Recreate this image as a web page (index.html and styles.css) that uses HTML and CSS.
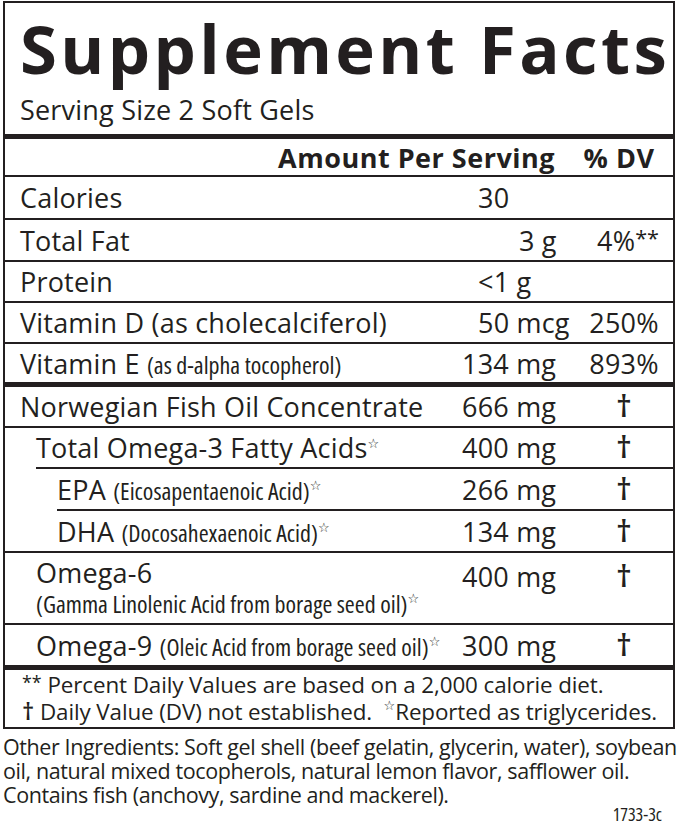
FILE: index.html
```html
<!DOCTYPE html>
<html lang="en">
<head>
<meta charset="utf-8">
<title>Supplement Facts</title>
<link rel="stylesheet" href="styles.css">
</head>
<body>
<div class="label">
  <div class="head">
    <h1 class="title">Supplement Facts</h1>
    <div class="serving">Serving Size 2 Soft Gels</div>
  </div>
  <div class="row colhead">
    <div class="hname">Amount Per Serving</div>
    <div class="dv">% DV</div>
  </div>
  <div class="row h43">
    <div class="name">Calories</div>
    <div class="amt in1">30</div>
    <div class="dv"></div>
  </div>
  <div class="row h42">
    <div class="name">Total Fat</div>
    <div class="amt in2">3 g</div>
    <div class="dv pct">4%<span class="ast">**</span></div>
  </div>
  <div class="row h41">
    <div class="name">Protein</div>
    <div class="amt in1">&lt;1 g</div>
    <div class="dv"></div>
  </div>
  <div class="row h41">
    <div class="name">Vitamin D (as cholecalciferol)</div>
    <div class="amt in1">50 mcg</div>
    <div class="dv">250%</div>
  </div>
  <div class="row h43 thick">
    <div class="name">Vitamin E <span class="cond">(as d-alpha tocopherol)</span></div>
    <div class="amt">134 mg</div>
    <div class="dv">893%</div>
  </div>
  <div class="group">
    <div class="row h41">
      <div class="name">Norwegian Fish Oil Concentrate</div>
      <div class="amt">666 mg</div>
      <div class="dv"><span class="dag">&#8224;</span></div>
    </div>
    <div class="sub sub1">
      <div class="row h41">
        <div class="name">Total Omega-3 Fatty Acids<span class="star">&#9734;</span></div>
        <div class="amt">400 mg</div>
        <div class="dv"><span class="dag">&#8224;</span></div>
      </div>
      <div class="sub sub2">
        <div class="row h42">
          <div class="name">EPA <span class="cond">(Eicosapentaenoic Acid)</span><span class="star">&#9734;</span></div>
          <div class="amt">266 mg</div>
          <div class="dv"><span class="dag">&#8224;</span></div>
        </div>
        <div class="row h40 last">
          <div class="name">DHA <span class="cond">(Docosahexaenoic Acid)</span><span class="star">&#9734;</span></div>
          <div class="amt">134 mg</div>
          <div class="dv"><span class="dag">&#8224;</span></div>
        </div>
      </div>
    </div>
  </div>
  <div class="row h72 two">
    <div class="name ind">Omega-6<br><span class="cond">(Gamma Linolenic Acid from borage seed oil)</span><span class="star">&#9734;</span></div>
    <div class="amt">400 mg</div>
    <div class="dv"><span class="dag">&#8224;</span></div>
  </div>
  <div class="row h45 thick">
    <div class="name ind">Omega-9 <span class="cond">(Oleic Acid from borage seed oil)</span><span class="star">&#9734;</span></div>
    <div class="amt">300 mg</div>
    <div class="dv"><span class="dag">&#8224;</span></div>
  </div>
  <div class="notes">
    <p><span class="ast">**</span> Percent Daily Values are based on a 2,000 calorie diet.</p>
    <p><span class="dag small">&#8224;</span> Daily Value (DV) not established. &nbsp;<span class="star">&#9734;</span>Reported as triglycerides.</p>
  </div>
</div>
<p class="ingredients">Other Ingredients: Soft gel shell (beef gelatin, glycerin, water), soybean oil, natural mixed tocopherols, natural lemon flavor, safflower oil. Contains fish (anchovy, sardine and mackerel).</p>
<div class="code">1733-3c</div>
</body>
</html>
```

FILE: styles.css
```css
* { box-sizing: border-box; }
html, body { background: #fff; }
body {
  margin: 0;
  color: #231f20;
  font-family: "Open Sans", "Noto Sans", sans-serif;
}
.label {
  margin: 1px 4px 0 3px;
  border: 2px solid #231f20;
}
.head {
  height: 136px;
  padding: 0 0 0 15px;
  border-bottom: 5px solid #231f20;
}
.title {
  margin: 0;
  font-size: 67px;
  font-weight: 700;
  line-height: 90px;
  letter-spacing: 3.4px;
}
.serving {
  margin-top: 2px;
  font-size: 27px;
  line-height: 30px;
  letter-spacing: 0.2px;
}
.row {
  display: flex;
  align-items: center;
  font-size: 27px;
  letter-spacing: 0.2px;
  border-bottom: 2px solid #231f20;
}
.row.thick { border-bottom-width: 5px; }
.row.last { border-bottom: 0; }
.h40 { height: 40px; }
.h41 { height: 41px; }
.h42 { height: 42px; }
.h43 { height: 43px; }
.h45 { height: 45px; }
.h72 { height: 72px; }
.row.two { align-items: flex-start; padding-top: 5px; }
.two .name { line-height: 30px; }
.colhead { height: 38px; font-weight: 700; letter-spacing: 0.5px; }
.hname { flex: 1; text-align: right; padding-right: 20px; }
.colhead .dv { padding-right: 10px; }
.name { flex: 1; padding-left: 15px; white-space: nowrap; }
.name.ind { padding-left: 31px; }
.amt { width: 113px; white-space: nowrap; }
.amt.in1 { padding-left: 16px; }
.amt.in2 { padding-left: 57px; }
.dv { width: 98px; text-align: center; white-space: nowrap; }
.dv.pct { padding-left: 8px; }
.ast {
  font-size: 0.8em;
  vertical-align: 0.25em;
  line-height: 0;
  letter-spacing: 0;
}
.dag {
  font-size: 31px;
  font-weight: 600;
  line-height: 0;
}
.dag.small { font-size: 24px; }
.cond {
  font-size: 24px;
  font-stretch: 75%;
  letter-spacing: 0;
}
.star {
  font-family: "DejaVu Sans", sans-serif;
  font-size: 13px;
  vertical-align: 10px;
  line-height: 0;
  letter-spacing: 0;
}
.group { border-bottom: 2px solid #231f20; }
.sub1 { margin-left: 31px; }
.sub1 .name { padding-left: 0; }
.sub2 { margin-left: 21px; }
.notes {
  height: 57px;
  padding: 1px 0 0 17px;
  font-size: 22.4px;
  letter-spacing: -0.1px;
  line-height: 27px;
}
.notes p { margin: 0; }
.ingredients {
  margin: 6px 2px 0 3px;
  font-size: 21.5px;
  line-height: 24px;
  letter-spacing: -0.4px;
}
.code {
  text-align: right;
  padding-right: 17px;
  font-size: 18px;
  font-stretch: 75%;
  line-height: 14px;
}
```
